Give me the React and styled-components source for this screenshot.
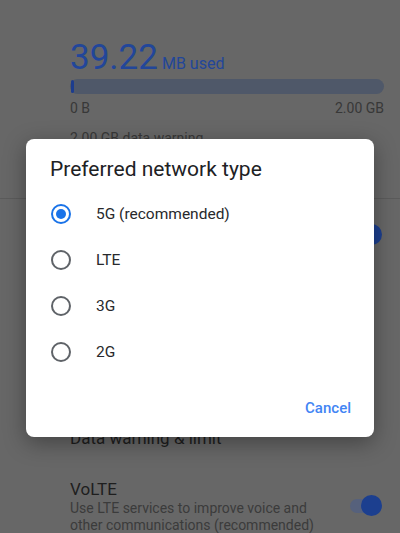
import React from "react";
import styled, { createGlobalStyle } from "styled-components";

const GlobalStyle = createGlobalStyle`
  html, body {
    margin: 0;
    padding: 0;
    background: #676767;
    font-family: Roboto, "Liberation Sans", sans-serif;
  }
  * {
    box-sizing: border-box;
  }
`;

const Page = styled.div`
  position: relative;
  width: 400px;
  height: 533px;
  overflow: hidden;
  background: #676767;
`;

const Usage = styled.div`
  padding: 38px 16px 0 70px;
`;

const UsageLine = styled.div`
  display: flex;
  align-items: baseline;
  gap: 4px;
  color: #22469a;
`;

const BigNumber = styled.span`
  font-size: 35px;
  line-height: 40px;
`;

const Unit = styled.span`
  font-size: 16px;
`;

const Track = styled.div`
  margin-top: 1px;
  height: 15px;
  border-radius: 8px;
  background: #4f5869;
  padding: 1px 0 1px 1px;
`;

const Fill = styled.div`
  height: 100%;
  border-radius: 2px;
  background: #1c3c8e;
`;

const Scale = styled.div`
  margin-top: 4px;
  display: flex;
  justify-content: space-between;
  font-size: 14px;
  line-height: 20px;
  color: #383838;
`;

const Warning = styled.div`
  margin-top: 10px;
  font-size: 14px;
  line-height: 20px;
  color: #383838;
`;

const Divider = styled.div`
  margin-top: 50px;
  height: 1px;
  background: #5b5b5b;
`;

const Row = styled.div`
  display: flex;
  align-items: center;
  justify-content: space-between;
  padding: 0 22px 0 70px;
  height: ${(p) => p.h}px;
`;

const RowText = styled.div`
  display: flex;
  flex-direction: column;
`;

const RowTitle = styled.div`
  font-size: 17px;
  line-height: 22px;
  color: #1e1e1e;
`;

const RowSub = styled.div`
  font-size: 14px;
  line-height: 17px;
  color: #3b3b3b;
`;

const Switch = styled.div`
  position: relative;
  flex: none;
  width: 28px;
  height: 14px;
  border-radius: 7px;
  background: #56617c;
  &::after {
    content: "";
    position: absolute;
    right: -4px;
    top: -4px;
    width: 21px;
    height: 21px;
    border-radius: 50%;
    background: #1c3f8f;
  }
`;

const Overlay = styled.div`
  position: absolute;
  inset: 0;
  display: flex;
  justify-content: center;
  align-items: flex-start;
  padding-top: 139px;
`;

const Dialog = styled.div`
  width: 348px;
  height: 298px;
  background: #ffffff;
  border-radius: 8px;
  box-shadow: 0 6px 22px rgba(0, 0, 0, 0.35);
  display: flex;
  flex-direction: column;
  padding-top: 18px;
`;

const Title = styled.div`
  padding: 0 24px;
  font-size: 21px;
  line-height: 24px;
  color: #202124;
`;

const Options = styled.div`
  margin-top: 10px;
  display: flex;
  flex-direction: column;
`;

const Option = styled.label`
  display: flex;
  align-items: center;
  height: 46px;
  padding-left: 25px;
  gap: 25px;
  font-size: 15.5px;
  color: #28292c;
`;

const Radio = styled.span`
  position: relative;
  width: 20px;
  height: 20px;
  border-radius: 50%;
  border: 2px solid ${(p) => (p.checked ? "#1a73e8" : "#5f6368")};
  &::after {
    content: "";
    display: ${(p) => (p.checked ? "block" : "none")};
    position: absolute;
    left: 3px;
    top: 3px;
    width: 10px;
    height: 10px;
    border-radius: 50%;
    background: #1a73e8;
  }
`;

const Actions = styled.div`
  margin-top: 15px;
  display: flex;
  justify-content: flex-end;
  padding-right: 15px;
`;

const TextButton = styled.button`
  border: none;
  background: none;
  height: 36px;
  padding: 0 8px;
  font-family: inherit;
  font-size: 15px;
  font-weight: 500;
  color: #4285f4;
`;

const options = ["5G (recommended)", "LTE", "3G", "2G"];

const App = () => {
  return (
    <Page>
      <GlobalStyle />
      <Usage>
        <UsageLine>
          <BigNumber>39.22</BigNumber>
          <Unit>MB used</Unit>
        </UsageLine>
        <Track>
          <Fill style={{ width: "3px" }} />
        </Track>
        <Scale>
          <span>0 B</span>
          <span>2.00 GB</span>
        </Scale>
        <Warning>2.00 GB data warning</Warning>
      </Usage>
      <Divider />
      <Row h={72}>
        <RowText>
          <RowTitle>Mobile data</RowTitle>
          <RowSub>Access data using mobile network</RowSub>
        </RowText>
        <Switch />
      </Row>
      <Row h={72}>
        <RowText>
          <RowTitle>Roaming</RowTitle>
        </RowText>
      </Row>
      <Row h={72}>
        <RowText>
          <RowTitle>App data usage</RowTitle>
        </RowText>
      </Row>
      <Row h={46}>
        <RowText>
          <RowTitle>Data warning &amp; limit</RowTitle>
        </RowText>
      </Row>
      <Row h={90}>
        <RowText>
          <RowTitle>VoLTE</RowTitle>
          <RowSub>
            Use LTE services to improve voice and
            <br />
            other communications (recommended)
          </RowSub>
        </RowText>
        <Switch />
      </Row>
      <Overlay>
        <Dialog>
          <Title>Preferred network type</Title>
          <Options>
            {options.map((o, i) => (
              <Option key={o}>
                <Radio checked={i === 0} />
                {o}
              </Option>
            ))}
          </Options>
          <Actions>
            <TextButton>Cancel</TextButton>
          </Actions>
        </Dialog>
      </Overlay>
    </Page>
  );
};

export default App;
